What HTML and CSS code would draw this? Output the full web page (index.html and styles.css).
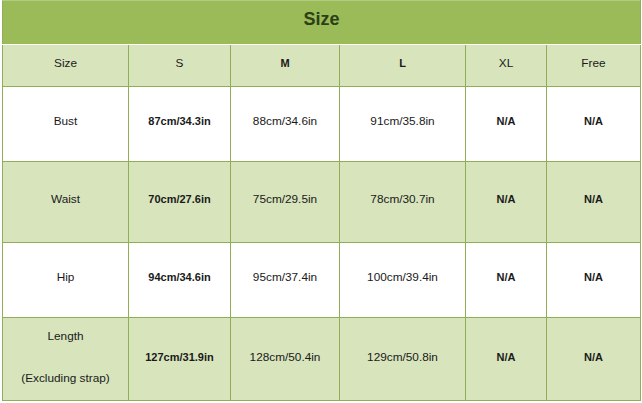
FILE: index.html
```html
<!DOCTYPE html>
<html>
<head>
<meta charset="utf-8">
<link rel="stylesheet" href="styles.css">
</head>
<body>
<div class="wrap">
<table class="size-table">
  <colgroup>
    <col class="c1"><col class="c2"><col class="c3"><col class="c4"><col class="c5"><col class="c6">
  </colgroup>
  <tr class="title-row"><td colspan="6" class="title">Size</td></tr>
  <tr class="head-row">
    <td>Size</td><td>S</td><td class="b">M</td><td class="b">L</td><td>XL</td><td>Free</td>
  </tr>
  <tr class="r-bust">
    <td>Bust</td><td class="b">87cm/34.3in</td><td>88cm/34.6in</td><td>91cm/35.8in</td><td class="b">N/A</td><td class="b">N/A</td>
  </tr>
  <tr class="r-waist alt">
    <td>Waist</td><td class="b">70cm/27.6in</td><td>75cm/29.5in</td><td>78cm/30.7in</td><td class="b">N/A</td><td class="b">N/A</td>
  </tr>
  <tr class="r-hip">
    <td>Hip</td><td class="b">94cm/34.6in</td><td>95cm/37.4in</td><td>100cm/39.4in</td><td class="b">N/A</td><td class="b">N/A</td>
  </tr>
  <tr class="r-len alt">
    <td><div class="len">Length</div><div class="excl">(Excluding strap)</div></td><td class="b">127cm/31.9in</td><td>128cm/50.4in</td><td>129cm/50.8in</td><td class="b">N/A</td><td class="b">N/A</td>
  </tr>
</table>
</div>
</body>
</html>
```

FILE: styles.css
```css
html, body {
  margin: 0;
  padding: 0;
  background: #ffffff;
}
.wrap {
  padding-left: 2px;
}
.size-table {
  border-collapse: collapse;
  table-layout: fixed;
  width: 639px;
  font-family: "Liberation Sans", Arial, sans-serif;
  font-size: 11.8px;
  color: #1a1a1a;
}
.c1 { width: 126px; }
.c2 { width: 102px; }
.c3 { width: 109px; }
.c4 { width: 126px; }
.c5 { width: 81px; }
.c6 { width: 94px; }
.size-table td {
  border: 1px solid #8fae55;
  text-align: center;
  vertical-align: middle;
  padding: 0 0 5px 0;
  line-height: 13px;
}
.title-row td.title {
  height: 37px;
  background: #9bbb59;
  border-top-color: #b3cc85;
  border-bottom: 1px solid #ffffff;
  font-size: 18px;
  line-height: 21px;
  font-weight: bold;
  color: #2c3f16;
  padding-bottom: 6px;
}
.head-row td {
  height: 36px;
  background: #d7e4bc;
  border-top-color: #ffffff;
}
.size-table td.b {
  font-weight: bold;
  font-size: 11px;
}
.r-bust td { height: 69px; }
.r-waist td { height: 75px; }
.r-hip td { height: 69px; }
.size-table .r-len td {
  height: 79px;
  padding-bottom: 3px;
}
.alt td { background: #d7e4bc; }
.len {
  margin-bottom: 29px;
}
.excl {
  white-space: nowrap;
}
```
